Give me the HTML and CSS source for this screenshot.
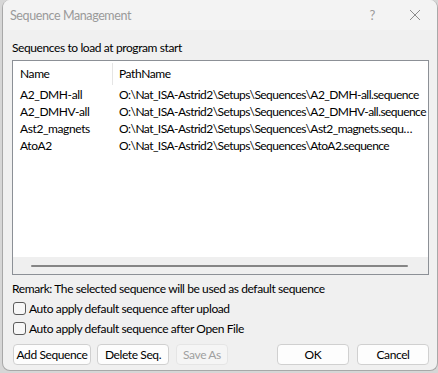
FILE: index.html
```html
<!DOCTYPE html>
<html lang="en">
<head>
    <meta charset="UTF-8">
    <title>Sequence Management</title>
    <link rel="stylesheet" href="styles.css">
</head>
<body>
    <div class="window">
        <div class="titlebar">
            <span class="title">Sequence Management</span>
            <span class="help">?</span>
            <svg class="close" width="12" height="12" viewBox="0 0 12 12">
                <path d="M1 1 L11 11 M11 1 L1 11" stroke="#8c8c8c" stroke-width="1" fill="none"/>
            </svg>
        </div>

        <div class="content">
            <div class="group-label">Sequences to load at program start</div>

            <div class="list">
                <div class="list-head">
                    <div class="col-name">Name</div>
                    <div class="col-path head-path">PathName</div>
                </div>
                <div class="list-body">
                    <div class="row">
                        <div class="col-name">A2_DMH-all</div>
                        <div class="col-path">O:\Nat_ISA-Astrid2\Setups\Sequences\A2_DMH-all.sequence</div>
                    </div>
                    <div class="row">
                        <div class="col-name">A2_DMHV-all</div>
                        <div class="col-path">O:\Nat_ISA-Astrid2\Setups\Sequences\A2_DMHV-all.sequence</div>
                    </div>
                    <div class="row">
                        <div class="col-name">Ast2_magnets</div>
                        <div class="col-path">O:\Nat_ISA-Astrid2\Setups\Sequences\Ast2_magnets.sequ…</div>
                    </div>
                    <div class="row">
                        <div class="col-name">AtoA2</div>
                        <div class="col-path">O:\Nat_ISA-Astrid2\Setups\Sequences\AtoA2.sequence</div>
                    </div>
                </div>
                <div class="hscroll">
                    <div class="thumb"></div>
                </div>
            </div>

            <div class="remark">Remark: The selected sequence will be used as default sequence</div>

            <label class="check"><span class="box"></span>Auto apply default sequence after upload</label>
            <label class="check"><span class="box"></span>Auto apply default sequence after Open File</label>

            <div class="buttons">
                <button class="btn w-add">Add Sequence</button>
                <button class="btn w-del">Delete Seq.</button>
                <button class="btn w-save" disabled>Save As</button>
                <span class="spacer"></span>
                <button class="btn w-ok">OK</button>
                <button class="btn w-cancel">Cancel</button>
            </div>
        </div>
    </div>
</body>
</html>
```

FILE: styles.css
```css
html, body {
    margin: 0;
    padding: 0;
}
body {
    background-color: #d6d6d6;
    font-family: 'Segoe UI', Lato, Arial, sans-serif;
    font-size: 12px;
    letter-spacing: -0.4px;
    color: #000;
    width: 438px;
    height: 373px;
    overflow: hidden;
}
.window {
    margin-left: 2px;
    width: 434px;
    height: 370px;
    background-color: #f0f0f0;
    border: 1px solid #a8a8a8;
    border-top: none;
    border-radius: 8px 8px 8px 8px;
    overflow: hidden;
}
.titlebar {
    height: 30px;
    display: flex;
    align-items: center;
    background-color: #f3f3f3;
    color: #9a9a9a;
}
.title {
    padding-left: 7px;
    font-size: 12.5px;
    flex: 1;
}
.help {
    font-size: 13px;
    margin-right: 34px;
}
.close {
    margin-right: 16px;
}
.content {
    padding: 0 8px 0 9px;
}
.group-label {
    margin-top: 10px;
    line-height: 16px;
    height: 16px;
    margin-bottom: 4px;
}
.list {
    height: 213px;
    border: 1px solid #8c9096;
    background-color: #fff;
    display: flex;
    flex-direction: column;
}
.list-head {
    display: flex;
    height: 25px;
    align-items: center;
}
.list-head .col-name {
    height: 22px;
    line-height: 22px;
    border-right: 1px solid #e5e5e5;
    width: 92px;
}
.col-name {
    flex-shrink: 0;
    width: 93px;
    padding-left: 7px;
    white-space: nowrap;
}
.col-path {
    flex: 1;
    min-width: 0;
    padding-left: 6px;
    white-space: nowrap;
    letter-spacing: -0.55px;
}
.head-path {
    letter-spacing: -0.4px;
}
.list-body {
    flex: 1;
}
.row {
    display: flex;
    height: 17px;
    line-height: 17px;
}
.hscroll {
    height: 17px;
    background-color: #efefef;
    display: flex;
    align-items: center;
    padding: 0 20px 0 18px;
}
.thumb {
    flex: 1;
    height: 2px;
    background-color: #858585;
    border-radius: 1px;
}
.remark {
    margin-top: 6px;
    line-height: 16px;
}
.check {
    display: flex;
    align-items: center;
    height: 18px;
    margin-top: 2px;
    white-space: nowrap;
}
.box {
    width: 11px;
    height: 11px;
    border: 1px solid #5c5c5c;
    border-radius: 3px;
    background-color: #f7f7f7;
    margin-left: 1px;
    margin-right: 3px;
}
.buttons {
    display: flex;
    margin-top: 7px;
    gap: 6px;
}
.spacer {
    flex: 1;
}
.btn {
    height: 21px;
    padding: 0;
    font-family: inherit;
    font-size: 12px;
    letter-spacing: -0.4px;
    color: #000;
    white-space: nowrap;
    background-color: #fdfdfd;
    border: 1px solid #d0d0d0;
    border-radius: 4px;
}
.btn:disabled {
    background-color: #f5f5f5;
    border-color: #e5e5e5;
    color: #a0a0a0;
}
.w-add { width: 78px; margin-left: 1px; }
.w-del { width: 72px; }
.w-save { width: 52px; margin-left: 1px; }
.w-ok { width: 72px; }
.w-cancel { width: 72px; margin-left: 2px; }
```
